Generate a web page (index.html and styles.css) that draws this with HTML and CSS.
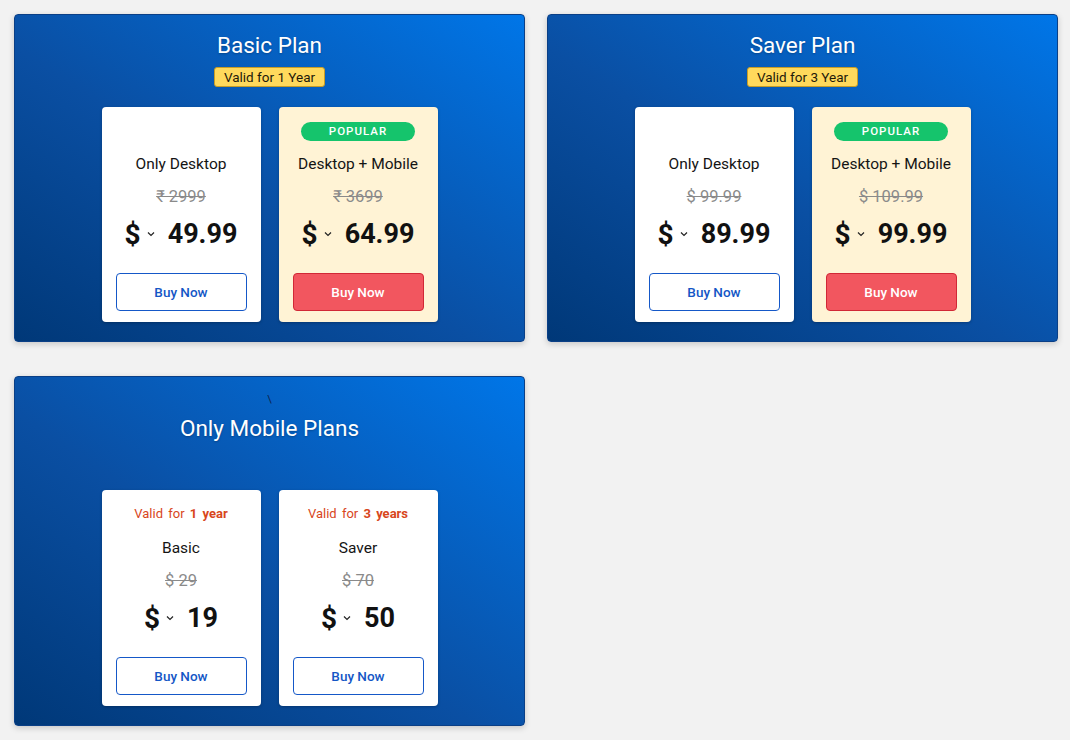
FILE: index.html
```html
<!DOCTYPE html>
<html>
<head>
<meta charset="utf-8">
<link rel="stylesheet" href="styles.css">
</head>
<body>
<div class="grid">
  <section class="panel">
    <h2 class="panel-title">Basic Plan</h2>
    <div class="validity">Valid for 1 Year</div>
    <div class="cards">
      <div class="card">
        <div class="top"><span class="popular hidden">POPULAR</span></div>
        <div class="name">Only Desktop</div>
        <div class="old">₹ 2999</div>
        <div class="price"><span class="cur">$</span><svg class="chev" viewBox="0 0 8 6" width="8" height="6"><path d="M1 1.5 L4 4.5 L7 1.5" fill="none" stroke="#222" stroke-width="1.2"/></svg><span class="amt">49.99</span></div>
        <button class="btn">Buy Now</button>
      </div>
      <div class="card featured">
        <div class="top"><span class="popular">POPULAR</span></div>
        <div class="name">Desktop + Mobile</div>
        <div class="old">₹ 3699</div>
        <div class="price"><span class="cur">$</span><svg class="chev" viewBox="0 0 8 6" width="8" height="6"><path d="M1 1.5 L4 4.5 L7 1.5" fill="none" stroke="#222" stroke-width="1.2"/></svg><span class="amt">64.99</span></div>
        <button class="btn btn-red">Buy Now</button>
      </div>
    </div>
  </section>

  <section class="panel">
    <h2 class="panel-title">Saver Plan</h2>
    <div class="validity">Valid for 3 Year</div>
    <div class="cards">
      <div class="card">
        <div class="top"><span class="popular hidden">POPULAR</span></div>
        <div class="name">Only Desktop</div>
        <div class="old">$ 99.99</div>
        <div class="price"><span class="cur">$</span><svg class="chev" viewBox="0 0 8 6" width="8" height="6"><path d="M1 1.5 L4 4.5 L7 1.5" fill="none" stroke="#222" stroke-width="1.2"/></svg><span class="amt">89.99</span></div>
        <button class="btn">Buy Now</button>
      </div>
      <div class="card featured">
        <div class="top"><span class="popular">POPULAR</span></div>
        <div class="name">Desktop + Mobile</div>
        <div class="old">$ 109.99</div>
        <div class="price"><span class="cur">$</span><svg class="chev" viewBox="0 0 8 6" width="8" height="6"><path d="M1 1.5 L4 4.5 L7 1.5" fill="none" stroke="#222" stroke-width="1.2"/></svg><span class="amt">99.99</span></div>
        <button class="btn btn-red">Buy Now</button>
      </div>
    </div>
  </section>

  <section class="panel panel-mobile">
    <div class="stray">\</div>
    <h2 class="panel-title">Only Mobile Plans</h2>
    <div class="cards cards-mobile">
      <div class="card">
        <div class="top"><span class="valid-for">Valid for <b>1 year</b></span></div>
        <div class="name">Basic</div>
        <div class="old">$ 29</div>
        <div class="price"><span class="cur">$</span><svg class="chev" viewBox="0 0 8 6" width="8" height="6"><path d="M1 1.5 L4 4.5 L7 1.5" fill="none" stroke="#222" stroke-width="1.2"/></svg><span class="amt">19</span></div>
        <button class="btn">Buy Now</button>
      </div>
      <div class="card">
        <div class="top"><span class="valid-for">Valid for <b>3 years</b></span></div>
        <div class="name">Saver</div>
        <div class="old">$ 70</div>
        <div class="price"><span class="cur">$</span><svg class="chev" viewBox="0 0 8 6" width="8" height="6"><path d="M1 1.5 L4 4.5 L7 1.5" fill="none" stroke="#222" stroke-width="1.2"/></svg><span class="amt">50</span></div>
        <button class="btn">Buy Now</button>
      </div>
    </div>
  </section>
</div>
</body>
</html>
```

FILE: styles.css
```css
* { box-sizing: border-box; }
html, body { margin: 0; padding: 0; }
body {
  background: #f2f2f2;
  font-family: Roboto, "Liberation Sans", Arial, sans-serif;
  width: 1070px;
  height: 740px;
  overflow: hidden;
}
.grid {
  display: grid;
  grid-template-columns: 511px 511px;
  column-gap: 22px;
  row-gap: 34px;
  padding: 14px 12px 0 14px;
  align-items: start;
}
.panel {
  background: linear-gradient(to top right, #003878 0%, #0a4fa3 45%, #0076e8 100%);
  border: 1px solid #0a3f86;
  border-radius: 4px;
  box-shadow: 0 2px 6px rgba(0,0,0,0.18);
  display: flex;
  flex-direction: column;
  align-items: center;
  padding: 17px 0 19px;
}
.panel-title {
  margin: 0;
  color: #fff;
  font-size: 22.5px;
  font-weight: 400;
  line-height: 26px;
  text-shadow: 0 1px 2px rgba(0,0,0,0.25);
}
.validity {
  margin-top: 9px;
  height: 20px;
  line-height: 18px;
  padding: 0 9px;
  background: #ffd95c;
  border: 1px solid #c89d26;
  border-radius: 3px;
  color: #1f1a0a;
  font-size: 13.5px;
}
.cards {
  margin-top: 20px;
  display: flex;
  gap: 18px;
}
.cards-mobile { margin-top: 49px; }
.stray {
  height: 12px;
  line-height: 12px;
  font-size: 11px;
  color: #0b2550;
}
.panel-mobile .panel-title { margin-top: 9px; }
.card {
  width: 159px;
  background: #fff;
  border-radius: 4px;
  box-shadow: 0 1px 3px rgba(0,0,0,0.25);
  display: flex;
  flex-direction: column;
  align-items: center;
  padding: 14px 14px 11px;
}
.cards-mobile .name { margin-top: 14px; }
.card.featured { background: #fff3d5; }
.top {
  height: 20px;
  display: flex;
  align-items: center;
  justify-content: center;
}
.popular {
  width: 114px;
  height: 19px;
  line-height: 19px;
  border-radius: 10px;
  background: #15c46c;
  color: #fff;
  font-size: 11.5px;
  font-weight: 500;
  letter-spacing: 1px;
  text-align: center;
}
.hidden { visibility: hidden; }
.valid-for {
  color: #d8461c;
  font-size: 13px;
  line-height: 16px;
  word-spacing: 2px;
}
.valid-for b { font-weight: 700; }
.name {
  margin-top: 13px;
  font-size: 15.5px;
  line-height: 20px;
  color: #141414;
}
.old {
  margin-top: 13px;
  font-size: 16.5px;
  line-height: 20px;
  color: #8a8a8a;
  text-decoration: line-through;
}
.price {
  margin-top: 10px;
  height: 34px;
  display: flex;
  align-items: center;
  font-weight: 700;
  font-size: 27px;
  color: #111;
}
.cur { font-size: 28px; }
.chev { margin: 0 13px 0 6px; }
.btn {
  margin-top: 22px;
  width: 131px;
  height: 38px;
  background: #fff;
  border: 1.5px solid #1558c8;
  border-radius: 4px;
  color: #1456c6;
  font-family: Roboto, "Liberation Sans", Arial, sans-serif;
  font-size: 13.5px;
  font-weight: 500;
  padding: 0;
}
.btn-red {
  background: #f2565f;
  border-color: #d12836;
  color: #fff;
}
```
